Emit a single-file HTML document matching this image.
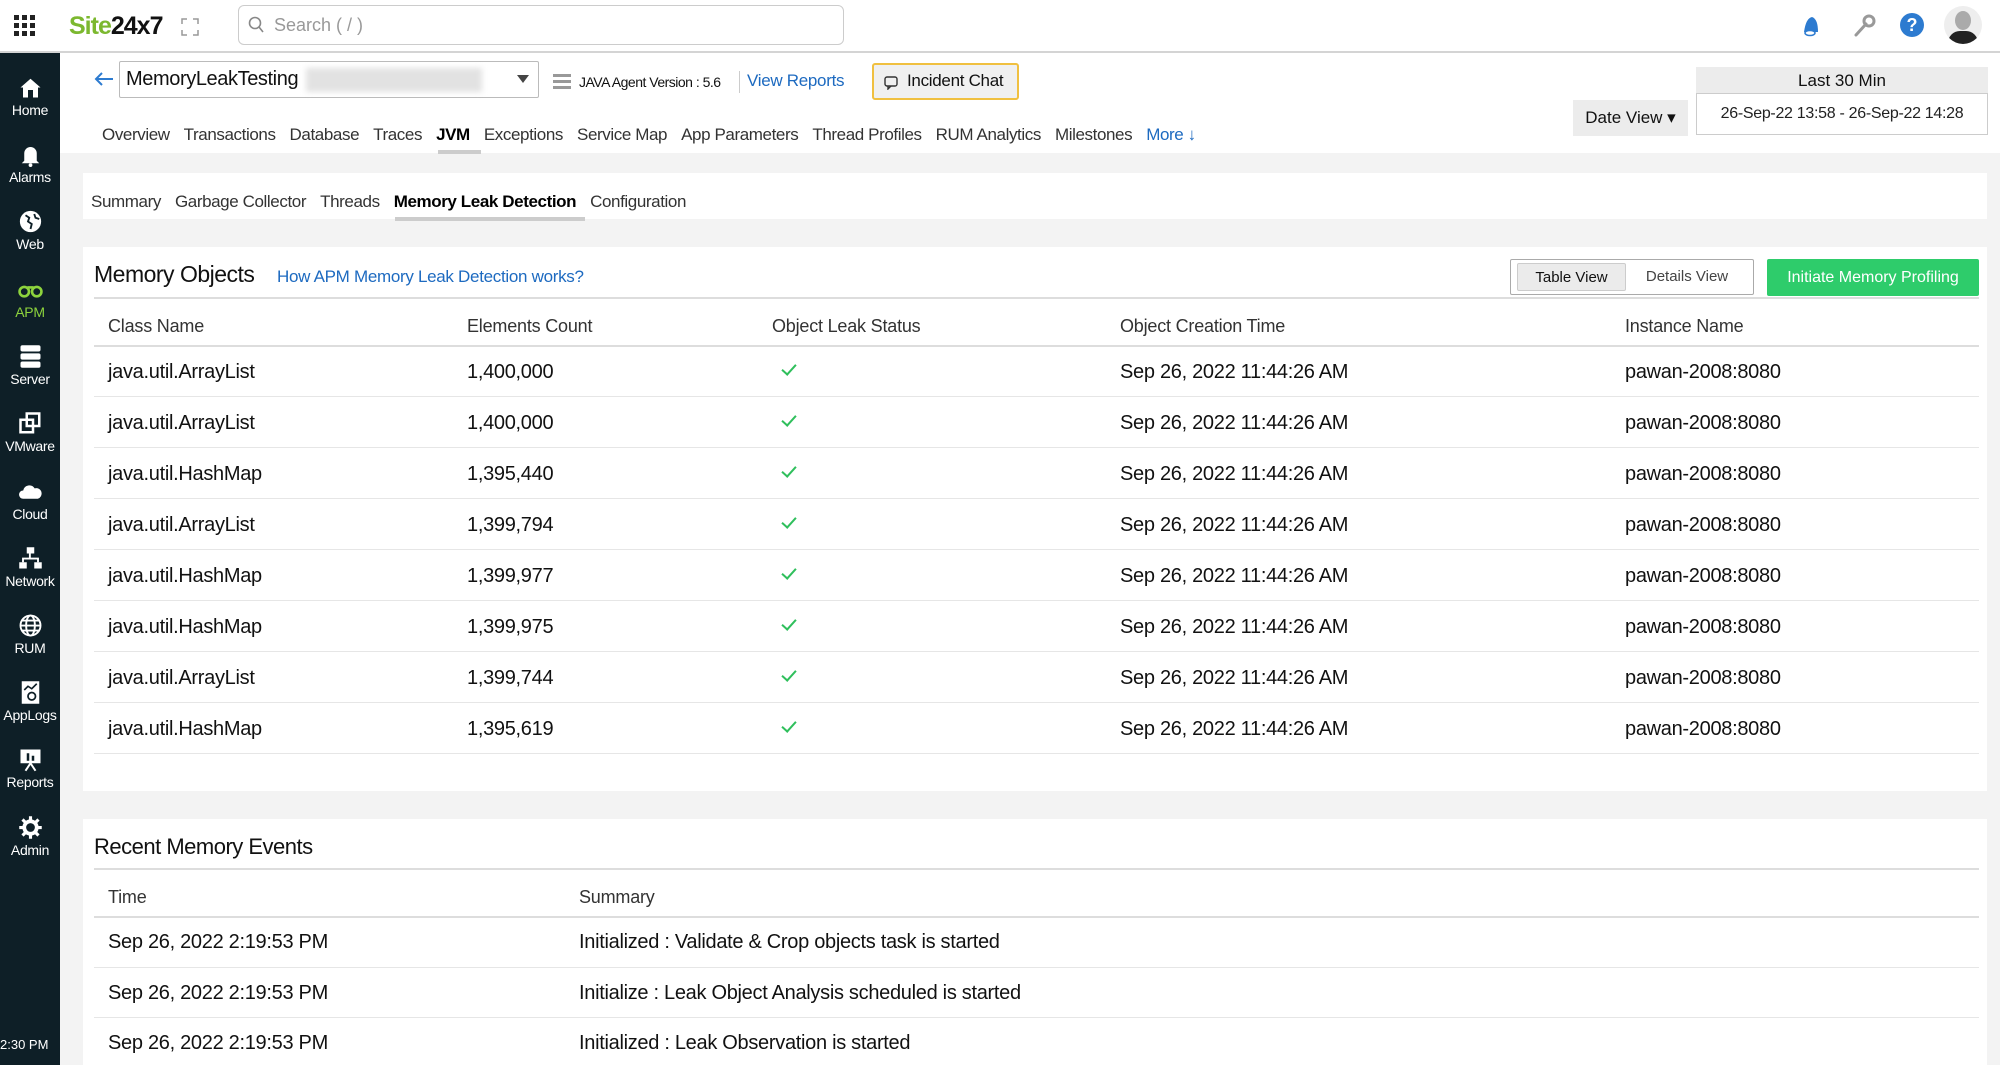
<!DOCTYPE html>
<html><head><meta charset="utf-8"><style>
*{margin:0;padding:0;box-sizing:border-box}
body{width:2000px;height:1065px;overflow:hidden;background:#f3f3f3;font-family:"Liberation Sans",sans-serif;color:#222;position:relative}
.a{position:absolute;white-space:nowrap}
.top{position:absolute;left:0;top:0;width:2000px;height:53px;background:#fff;border-bottom:2px solid #d4d4d4}
.side{position:absolute;left:0;top:53px;width:60px;height:1012px;background:#0e1f27}
.si{position:absolute;left:0;width:60px;text-align:center;color:#fff;font-size:14px;letter-spacing:-0.3px}
.si .ic{display:block;margin:0 auto 2px;width:25px;height:25px}
.hdr{position:absolute;left:60px;top:53px;width:1940px;height:100px;background:#fff}
.card{position:absolute;background:#fff}
.tabs span{margin-right:14px}
.cell{position:absolute;font-size:20px;letter-spacing:-0.3px;color:#111}
.hcell{position:absolute;font-size:18px;color:#333;letter-spacing:-0.2px}
.line{position:absolute;height:1px;background:#e6e6e6}
.ck{position:absolute;width:14px;height:8px;border-left:2px solid #2fbf5c;border-bottom:2px solid #2fbf5c;transform:rotate(-48deg)}
</style></head><body>
<div class="top"></div>
<svg class="a" style="left:14px;top:15px" width="22" height="22"><g fill="#222"><rect x="0" y="0" width="5" height="5"/><rect x="8" y="0" width="5" height="5"/><rect x="16" y="0" width="5" height="5"/><rect x="0" y="8" width="5" height="5"/><rect x="8" y="8" width="5" height="5"/><rect x="16" y="8" width="5" height="5"/><rect x="0" y="16" width="5" height="5"/><rect x="8" y="16" width="5" height="5"/><rect x="16" y="16" width="5" height="5"/></g></svg>
<div class="a" style="left:69px;top:12px;font-size:25px;font-weight:bold;letter-spacing:-1px"><span style="color:#7cb82f">Site</span><span style="color:#111">24x7</span></div>
<svg class="a" style="left:181px;top:18px" width="18" height="18" fill="none" stroke="#999" stroke-width="1.5"><path d="M1 6V1h5M12 1h5v5M17 12v5h-5M6 17H1v-5"/></svg>
<div class="a" style="left:238px;top:5px;width:606px;height:40px;border:1px solid #ccc;border-radius:6px"></div>
<svg class="a" style="left:248px;top:16px" width="16" height="18" fill="none" stroke="#888" stroke-width="1.6"><circle cx="7" cy="7" r="5.5"/><path d="M11 11l4 5"/></svg>
<div class="a" style="left:274px;top:15px;font-size:18px;color:#999">Search ( / )</div>
<svg class="a" style="left:1800px;top:14px" width="22" height="24"><path d="M4 18 Q6 4 12 3 Q18 5 18 18Z" fill="#2d7bd0"/><ellipse cx="10" cy="19" rx="5" ry="2.5" fill="#fff" stroke="#2d7bd0" stroke-width="1.5"/></svg>
<svg class="a" style="left:1852px;top:14px" width="24" height="24"><path d="M4 21L14 10" stroke="#999" stroke-width="3" stroke-linecap="round"/><circle cx="17" cy="7" r="5" fill="none" stroke="#999" stroke-width="3"/></svg>
<div class="a" style="left:1900px;top:13px;width:24px;height:24px;border-radius:50%;background:#2d7bd0;color:#fff;font-weight:bold;font-size:18px;text-align:center;line-height:24px">?</div>
<div class="a" style="left:1944px;top:6px;width:38px;height:38px;border-radius:50%;background:#eee;overflow:hidden"><div style="position:absolute;left:11px;top:5px;width:16px;height:19px;border-radius:50%;background:#aaa"></div><div style="position:absolute;left:4px;top:25px;width:30px;height:18px;border-radius:12px 12px 0 0;background:#222"></div></div>

<div class="side"></div>
<div class="si" style="top:75px"><svg class="ic" viewBox="0 0 20 20"><path d="M2 10L10 3l8 7h-2v8H4v-8z" fill="#fff"/><rect x="8" y="12" width="4" height="6" fill="#0e1f27"/></svg>Home</div>
<div class="si" style="top:142px"><svg class="ic" viewBox="0 0 20 20"><path d="M5 15V9a5 5 0 0110 0v6l2 2H3z" fill="#fff"/><circle cx="10" cy="18.5" r="1.5" fill="#fff"/></svg>Alarms</div>
<div class="si" style="top:209px"><svg class="ic" viewBox="0 0 20 20"><circle cx="10" cy="10" r="8.5" fill="#fff"/><path d="M6 5l3 2-1 3 3 2-1 4M13 4l1 3 3 1" stroke="#0e1f27" stroke-width="1.5" fill="none"/></svg>Web</div>
<div class="si" style="top:277px;color:#8dd33d"><svg class="ic" viewBox="0 0 24 20"><circle cx="6" cy="12" r="4.5" fill="none" stroke="#8dd33d" stroke-width="2.5"/><circle cx="18" cy="12" r="4.5" fill="none" stroke="#8dd33d" stroke-width="2.5"/><path d="M9 8h6" stroke="#8dd33d" stroke-width="2.5"/></svg>APM</div>
<div class="si" style="top:344px"><svg class="ic" viewBox="0 0 20 20"><rect x="2" y="1" width="16" height="5" rx="1.5" fill="#fff"/><rect x="2" y="7.5" width="16" height="5" rx="1.5" fill="#fff"/><rect x="2" y="14" width="16" height="5" rx="1.5" fill="#fff"/></svg>Server</div>
<div class="si" style="top:411px"><svg class="ic" viewBox="0 0 20 20" fill="none" stroke="#fff" stroke-width="2"><rect x="2" y="7" width="10" height="10"/><rect x="7" y="2" width="10" height="10"/></svg>VMware</div>
<div class="si" style="top:479px"><svg class="ic" viewBox="0 0 24 20"><path d="M5 17a4 4 0 010-8 6 6 0 0111-2 5 5 0 013 10z" fill="#fff"/></svg>Cloud</div>
<div class="si" style="top:546px"><svg class="ic" viewBox="0 0 20 20" fill="#fff"><rect x="7" y="1" width="6" height="5"/><rect x="1" y="13" width="6" height="5"/><rect x="13" y="13" width="6" height="5"/><path d="M9.5 6v4M4 13v-3h12v3" stroke="#fff" stroke-width="1.5" fill="none"/></svg>Network</div>
<div class="si" style="top:613px"><svg class="ic" viewBox="0 0 20 20" fill="none" stroke="#fff" stroke-width="1.5"><circle cx="10" cy="10" r="8"/><ellipse cx="10" cy="10" rx="3.5" ry="8"/><path d="M2 10h16M3.5 6h13M3.5 14h13"/></svg>RUM</div>
<div class="si" style="top:680px"><svg class="ic" viewBox="0 0 20 20"><rect x="3" y="1" width="14" height="18" fill="#fff"/><path d="M5 8l3-3 3 2 4-4" stroke="#0e1f27" stroke-width="1.3" fill="none"/><circle cx="11" cy="13" r="3" fill="none" stroke="#0e1f27" stroke-width="1.4"/></svg>AppLogs</div>
<div class="si" style="top:747px"><svg class="ic" viewBox="0 0 20 20"><rect x="2" y="2" width="16" height="11" fill="#fff"/><path d="M6 19l4-6 4 6" stroke="#fff" stroke-width="1.6" fill="none"/><rect x="7" y="5" width="2" height="6" fill="#0e1f27"/><rect x="11" y="7" width="2" height="4" fill="#0e1f27"/></svg>Reports</div>
<div class="si" style="top:815px"><svg class="ic" viewBox="0 0 20 20"><circle cx="10" cy="10" r="5" fill="none" stroke="#fff" stroke-width="3"/><path d="M10 1v4M10 15v4M1 10h4M15 10h4M3.6 3.6l2.8 2.8M13.6 13.6l2.8 2.8M3.6 16.4l2.8-2.8M13.6 6.4l2.8-2.8" stroke="#fff" stroke-width="2.5"/></svg>Admin</div>
<div class="a" style="left:0;top:1037px;color:#fff;font-size:13px">2:30 PM</div>

<div class="hdr"></div>
<svg class="a" style="left:94px;top:71px" width="20" height="16" fill="none" stroke="#2d7bd0" stroke-width="2"><path d="M19 8H2M8 2L2 8l6 6"/></svg>
<div class="a" style="left:119px;top:61px;width:420px;height:37px;border:1px solid #bbb;border-radius:2px"></div>
<div class="a" style="left:126px;top:68px;font-size:20px;color:#111;letter-spacing:-0.4px">MemoryLeakTesting</div>
<div class="a" style="left:306px;top:68px;width:176px;height:24px;background:#e2e2e2;filter:blur(3px)"></div>
<div class="a" style="left:517px;top:75px;width:0;height:0;border-left:6px solid transparent;border-right:6px solid transparent;border-top:8px solid #444"></div>
<div class="a" style="left:553px;top:74px;width:18px;height:3px;background:#999;box-shadow:0 6px 0 #999,0 12px 0 #999"></div>
<div class="a" style="left:579px;top:74px;font-size:14px;color:#111;letter-spacing:-0.5px">JAVA Agent Version : 5.6</div>
<div class="a" style="left:739px;top:71px;width:1px;height:22px;background:#ccc"></div>
<div class="a" style="left:747px;top:71px;font-size:17px;color:#1d6ac0;letter-spacing:-0.3px">View Reports</div>
<div class="a" style="left:872px;top:63px;width:147px;height:37px;background:#f0f0f0;border:2px solid #f0c040;border-radius:3px"></div>
<svg class="a" style="left:884px;top:76px" width="14" height="14" fill="none" stroke="#333" stroke-width="1.4"><rect x="1" y="1" width="12" height="9" rx="2"/><path d="M4 10v3l3-3"/></svg>
<div class="a" style="left:907px;top:71px;font-size:17px;color:#111;letter-spacing:-0.3px">Incident Chat</div>
<div class="a tabs" style="left:102px;top:125px;font-size:17px;color:#333;letter-spacing:-0.4px"><span>Overview</span><span>Transactions</span><span>Database</span><span>Traces</span><span style="color:#000;font-weight:bold">JVM</span><span>Exceptions</span><span>Service Map</span><span>App Parameters</span><span>Thread Profiles</span><span>RUM Analytics</span><span>Milestones</span><span style="color:#1d6ac0">More ↓</span></div>
<div class="a" style="left:438px;top:150px;width:43px;height:4px;background:#ccc"></div>
<div class="a" style="left:1696px;top:67px;width:292px;height:28px;background:#ececec;text-align:center;font-size:17px;line-height:28px;color:#111">Last 30 Min</div>
<div class="a" style="left:1696px;top:93px;width:292px;height:42px;background:#fff;border:1px solid #ccc;text-align:center;font-size:16px;line-height:40px;color:#222;letter-spacing:-0.3px">26-Sep-22 13:58 - 26-Sep-22 14:28</div>
<div class="a" style="left:1573px;top:100px;width:115px;height:36px;background:#ececec;text-align:center;font-size:17px;line-height:36px;color:#111">Date View ▾</div>

<div class="card" style="left:83px;top:173px;width:1904px;height:46px"></div>
<div class="a tabs" style="left:91px;top:192px;font-size:17px;color:#333;letter-spacing:-0.4px"><span>Summary</span><span>Garbage Collector</span><span>Threads</span><span style="color:#000;font-weight:bold">Memory Leak Detection</span><span>Configuration</span></div>
<div class="a" style="left:395px;top:217px;width:190px;height:4px;background:#ccc"></div>

<div class="card" style="left:83px;top:247px;width:1904px;height:544px"></div>
<div class="a" style="left:94px;top:261px;font-size:23px;color:#111;letter-spacing:-0.5px">Memory Objects</div>
<div class="a" style="left:277px;top:267px;font-size:17px;color:#1d6ac0;letter-spacing:-0.3px">How APM Memory Leak Detection works?</div>
<div class="a" style="left:1510px;top:259px;width:244px;height:36px;border:1px solid #aaa;border-radius:2px"></div>
<div class="a" style="left:1517px;top:263px;width:109px;height:28px;background:#ebebeb;border:1px solid #ccc;border-radius:2px;text-align:center;line-height:28px;font-size:15px;color:#111">Table View</div>
<div class="a" style="left:1632px;top:263px;width:110px;text-align:center;line-height:28px;font-size:15px;color:#444">Details View</div>
<div class="a" style="left:1767px;top:259px;width:212px;height:37px;background:#2ecc6b;border-radius:2px;text-align:center;line-height:37px;font-size:16px;color:#fff">Initiate Memory Profiling</div>
<div class="line" style="left:94px;top:297px;width:1885px;height:2px;background:#ddd"></div>
<div class="hcell" style="left:108px;top:316px">Class Name</div>
<div class="hcell" style="left:467px;top:316px">Elements Count</div>
<div class="hcell" style="left:772px;top:316px">Object Leak Status</div>
<div class="hcell" style="left:1120px;top:316px">Object Creation Time</div>
<div class="hcell" style="left:1625px;top:316px">Instance Name</div>
<div class="line" style="left:94px;top:345px;width:1885px;height:2px;background:#ddd"></div>

<div id="rows"></div>
<script>
var d=[["java.util.ArrayList","1,400,000"],["java.util.ArrayList","1,400,000"],["java.util.HashMap","1,395,440"],["java.util.ArrayList","1,399,794"],["java.util.HashMap","1,399,977"],["java.util.HashMap","1,399,975"],["java.util.ArrayList","1,399,744"],["java.util.HashMap","1,395,619"]];
var h="";
for(var i=0;i<d.length;i++){var y=371+i*51;
h+='<div class="cell" style="left:108px;top:'+(y-10)+'px">'+d[i][0]+'</div>';
h+='<div class="cell" style="left:467px;top:'+(y-10)+'px">'+d[i][1]+'</div>';
h+='<div class="ck" style="left:782px;top:'+(y-7)+'px"></div>';
h+='<div class="cell" style="left:1120px;top:'+(y-10)+'px">Sep 26, 2022 11:44:26 AM</div>';
h+='<div class="cell" style="left:1625px;top:'+(y-10)+'px">pawan-2008:8080</div>';
h+='<div class="line" style="left:94px;top:'+(y+25)+'px;width:1885px"></div>';}
document.getElementById("rows").innerHTML=h;
</script>

<div class="card" style="left:83px;top:819px;width:1904px;height:246px"></div>
<div class="a" style="left:94px;top:834px;font-size:22px;color:#111;letter-spacing:-0.5px">Recent Memory Events</div>
<div class="line" style="left:94px;top:868px;width:1885px;height:2px;background:#ddd"></div>
<div class="hcell" style="left:108px;top:887px">Time</div>
<div class="hcell" style="left:579px;top:887px">Summary</div>
<div class="line" style="left:94px;top:916px;width:1885px;height:2px;background:#ddd"></div>
<div class="cell" style="left:108px;top:931px">Sep 26, 2022 2:19:53 PM</div>
<div class="cell" style="left:579px;top:931px">Initialized : Validate &amp; Crop objects task is started</div>
<div class="line" style="left:94px;top:967px;width:1885px"></div>
<div class="cell" style="left:108px;top:982px">Sep 26, 2022 2:19:53 PM</div>
<div class="cell" style="left:579px;top:982px">Initialize : Leak Object Analysis scheduled is started</div>
<div class="line" style="left:94px;top:1017px;width:1885px"></div>
<div class="cell" style="left:108px;top:1032px">Sep 26, 2022 2:19:53 PM</div>
<div class="cell" style="left:579px;top:1032px">Initialized : Leak Observation is started</div>
</body></html>
